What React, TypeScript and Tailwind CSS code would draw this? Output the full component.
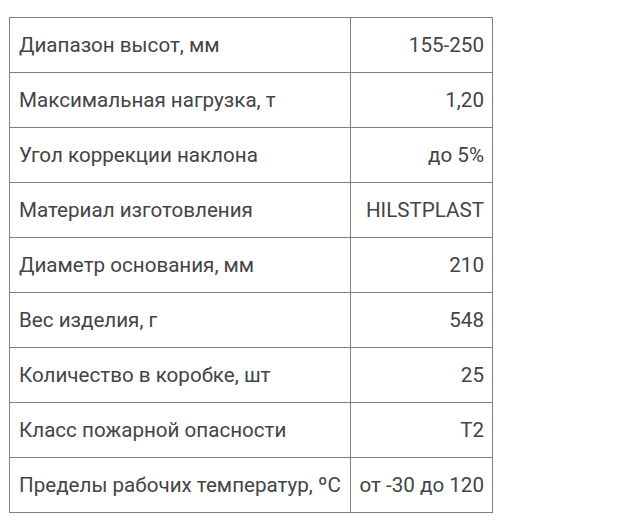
import React from "react";

const rows: [string, string][] = [
  ["Диапазон высот, мм", "155-250"],
  ["Максимальная нагрузка, т", "1,20"],
  ["Угол коррекции наклона", "до 5%"],
  ["Материал изготовления", "HILSTPLAST"],
  ["Диаметр основания, мм", "210"],
  ["Вес изделия, г", "548"],
  ["Количество в коробке, шт", "25"],
  ["Класс пожарной опасности", "Т2"],
  ["Пределы рабочих температур, ºC", "от -30 до 120"],
];

export default function App() {
  return (
    <div className="w-[631px] h-[532px] bg-white pt-[17px] pl-[9px]" style={{ fontFamily: "Roboto, sans-serif" }}>
      <table className="border-collapse text-[20.6px] text-[#444]">
        <tbody>
          {rows.map(([k, v]) => (
            <tr key={k} className="h-[55px]">
              <td className="w-[341px] border border-[#808080] px-[9px] py-0 leading-none">{k}</td>
              <td className="w-[142px] border border-[#808080] px-[8px] py-0 text-right leading-none">{v}</td>
            </tr>
          ))}
        </tbody>
      </table>
    </div>
  );
}
